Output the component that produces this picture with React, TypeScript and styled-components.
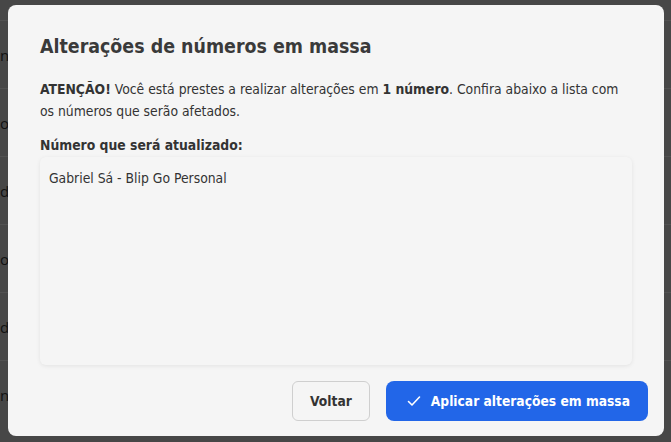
import React from "react";
import styled, { createGlobalStyle } from "styled-components";

const Global = createGlobalStyle`
  html, body { margin: 0; padding: 0; }
  body {
    width: 671px;
    height: 442px;
    overflow: hidden;
    background: #474747;
    font-family: "DejaVu Sans Condensed", "DejaVu Sans", sans-serif;
  }
`;

const Stage = styled.div`
  position: relative;
  width: 671px;
  height: 442px;
  overflow: hidden;
  background: #474747;
`;

const BackPage = styled.div`
  display: flex;
  flex-direction: column;
  padding-top: 20px;
`;

const BackRow = styled.div`
  height: 68px;
  border-top: 1px solid #525252;
  display: flex;
  align-items: center;
  box-sizing: border-box;
  font-family: "Open Sans", sans-serif;
  font-size: 15px;
  color: #111;
`;

const Overlay = styled.div`
  position: absolute;
  inset: 0;
  display: flex;
  justify-content: flex-start;
  align-items: flex-start;
  padding: 5px 0 0 8px;
`;

const Modal = styled.div`
  width: 656px;
  height: 431px;
  box-sizing: border-box;
  background: #f5f5f5;
  border-radius: 8px;
  display: flex;
  flex-direction: column;
  padding: 30px 16px 15px 32px;
`;

const Title = styled.h1`
  margin: 0;
  font-size: 19.4px;
  font-weight: 700;
  color: #3a3a3a;
  line-height: 24px;
`;

const Paragraph = styled.p`
  margin: 19px 16px 0 0;
  font-size: 13.8px;
  line-height: 22px;
  color: #333;
  b { font-weight: 700; }
`;

const Label = styled.div`
  margin-top: 12px;
  font-size: 13.8px;
  line-height: 22px;
  font-weight: 700;
  color: #333;
`;

const ListBox = styled.div`
  margin: 1px 16px 0 0;
  height: 208px;
  box-sizing: border-box;
  background: #f5f5f5;
  border-radius: 6px;
  box-shadow: 0 1px 4px rgba(0, 0, 0, 0.08);
  padding: 11px 9px;
`;

const ListItem = styled.div`
  font-size: 13.8px;
  line-height: 20px;
  color: #333;
`;

const Footer = styled.div`
  margin-top: auto;
  display: flex;
  justify-content: flex-end;
  gap: 16px;
`;

const Button = styled.button<{ $primary?: boolean }>`
  height: 40px;
  box-sizing: border-box;
  display: inline-flex;
  align-items: center;
  justify-content: center;
  gap: 10px;
  font-family: inherit;
  font-size: 13.7px;
  font-weight: 700;
  border-radius: ${(p) => (p.$primary ? "8px" : "6px")};
  border: ${(p) => (p.$primary ? "none" : "1px solid #cfcfcf")};
  background: ${(p) => (p.$primary ? "#2266e8" : "#f5f5f5")};
  color: ${(p) => (p.$primary ? "#fff" : "#333")};
  padding: ${(p) => (p.$primary ? "0 18px 0 21px" : "0 17px")};
  cursor: pointer;
`;

const Check = () => (
  <svg width="14" height="14" viewBox="0 0 14 14" fill="none">
    <path d="M1.5 7.5 L5 11 L12.5 3" stroke="#fff" strokeWidth="1.6" strokeLinecap="round" strokeLinejoin="round" />
  </svg>
);

export default function App() {
  const rows = ["n", "o", "d", "od", "d", "n,"];
  return (
    <>
      <Global />
      <Stage>
        <BackPage>
          {rows.map((r, i) => (
            <BackRow key={i}>{r}</BackRow>
          ))}
        </BackPage>
        <Overlay>
          <Modal>
            <Title>Alterações de números em massa</Title>
            <Paragraph>
              <b>ATENÇÃO!</b> Você está prestes a realizar alterações em <b>1 número</b>. Confira abaixo a lista com os números que serão afetados.
            </Paragraph>
            <Label>Número que será atualizado:</Label>
            <ListBox>
              <ListItem>Gabriel Sá - Blip Go Personal</ListItem>
            </ListBox>
            <Footer>
              <Button>Voltar</Button>
              <Button $primary>
                <Check />
                Aplicar alterações em massa
              </Button>
            </Footer>
          </Modal>
        </Overlay>
      </Stage>
    </>
  );
}
